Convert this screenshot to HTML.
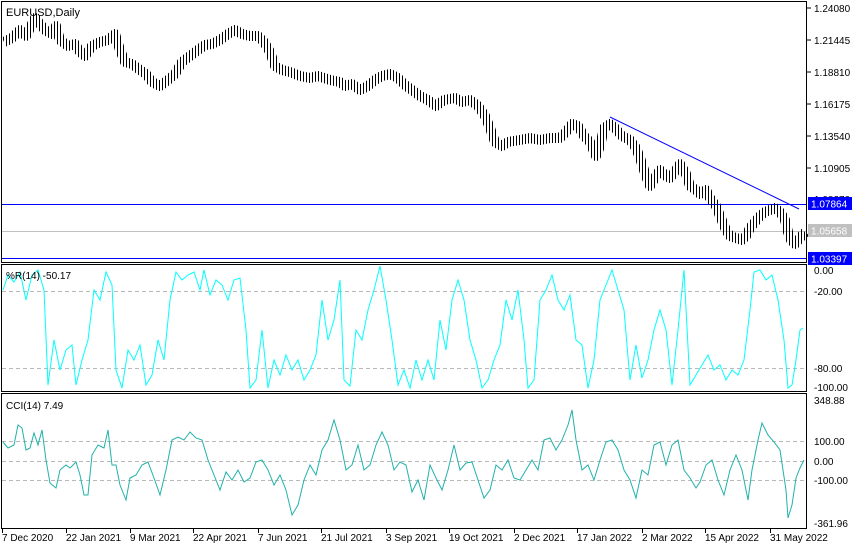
<!DOCTYPE html>
<html><head><meta charset="utf-8"><style>
body{margin:0;background:#fff;width:860px;height:550px;overflow:hidden}
svg{display:block;font-family:"Liberation Sans",sans-serif}
</style></head><body>
<svg width="860" height="550" viewBox="0 0 860 550" xmlns="http://www.w3.org/2000/svg">
<defs>
<pattern id="bars" width="3" height="10" patternUnits="userSpaceOnUse"><rect x="0" y="0" width="1" height="10" fill="#000"/></pattern>
</defs>
<rect width="860" height="550" fill="#fff"/>
<g fill="none" stroke="#000" stroke-width="1">
<rect x="1.5" y="1.5" width="805" height="261"/>
<rect x="1.5" y="264.5" width="805" height="127"/>
<rect x="1.5" y="393.5" width="805" height="135"/>
</g>
<line x1="2" y1="231.5" x2="806" y2="231.5" stroke="#c0c0c0"/>
<line x1="2" y1="204.5" x2="806" y2="204.5" stroke="#0000ff"/>
<line x1="2" y1="258.5" x2="806" y2="258.5" stroke="#0000ff"/>
<line x1="610" y1="117" x2="799" y2="209" stroke="#0000ff"/>
<polyline fill="none" stroke="url(#bars)" stroke-width="10" stroke-linejoin="round" points="4,42 12,38 20,30 26,36 35,18 40,24 45,30 52,34 56,26 60,40 68,46 75,44 80,52 85,56 92,46 100,42 108,40 115,34 120,50 125,62 132,64 140,70 146,74 152,82 160,86 168,80 175,74 182,62 190,56 198,50 205,45 212,44 220,40 228,34 235,30 242,34 250,36 258,36 264,42 270,52 275,66 282,70 290,72 300,76 310,78 318,76 330,80 340,82 345,86 352,84 360,90 368,86 375,80 382,76 390,74 398,78 405,85 412,90 420,96 428,100 436,106 444,100 455,98 462,102 470,100 478,106 485,116 490,128 495,142 502,146 508,142 520,140 530,138 540,140 550,138 560,138 566,132 572,124 578,126 584,136 590,142 596,156 600,146 604,128 610,124 615,128 622,136 630,140 636,148 640,158 646,176 650,186 656,176 660,170 666,176 670,178 676,170 680,164 686,174 690,186 696,190 700,194 706,190 710,198 716,206 720,216 726,230 730,236 736,238 742,240 746,236 750,228 755,222 760,216 765,212 770,210 775,208 780,212 785,220 788,232 791,240 795,244 800,238 805,232"/>
<text x="6" y="16" font-size="11">EURUSD,Daily</text>
<g stroke="#b8b8b8" stroke-dasharray="4,3"><line x1="2" y1="291.5" x2="806" y2="291.5"/><line x1="2" y1="368.5" x2="806" y2="368.5"/></g>
<polyline fill="none" stroke="#00ffff" stroke-width="1" points="3,290 8,275 14,282 20,272 26,300 32,275 38,270 44,290 48,385 54,340 60,370 66,350 72,345 76,385 82,360 88,340 94,290 100,300 106,272 112,285 116,370 122,388 128,350 134,360 140,345 146,385 152,375 158,340 164,360 170,300 176,272 182,280 188,275 194,272 200,290 204,270 210,295 216,280 222,285 228,300 234,280 240,278 246,330 250,388 256,380 262,330 268,388 274,360 280,375 286,355 292,370 298,360 304,380 310,370 316,355 322,300 328,340 334,320 340,280 344,380 350,386 356,330 362,340 368,310 374,290 380,266 386,300 392,340 398,385 404,370 410,388 416,360 422,380 428,360 434,380 440,320 446,350 452,300 458,280 464,300 470,340 476,360 482,388 488,380 494,360 500,345 506,300 512,320 518,290 524,340 528,388 534,380 540,300 546,290 552,275 558,300 564,310 570,295 576,340 582,345 588,388 594,360 600,300 606,285 612,270 618,290 624,310 630,380 636,345 642,378 648,360 654,330 660,310 666,330 672,385 678,330 684,270 690,385 696,375 702,365 708,355 714,370 720,365 726,380 732,370 738,375 744,360 750,310 754,272 760,270 766,280 772,275 778,300 784,340 788,388 792,385 796,360 800,330 803,328"/>
<text x="6" y="279" font-size="10">%R(14) -50.17</text>
<g stroke="#b8b8b8" stroke-dasharray="4,3"><line x1="2" y1="441.5" x2="806" y2="441.5"/><line x1="2" y1="461.5" x2="806" y2="461.5"/><line x1="2" y1="480.5" x2="806" y2="480.5"/></g>
<polyline fill="none" stroke="#20b2aa" stroke-width="1" points="3,442 8,448 14,445 18,425 22,428 26,450 30,448 34,433 38,445 42,430 46,460 50,483 56,488 60,470 66,465 70,468 76,462 80,475 84,495 88,495 92,455 98,445 104,448 108,430 112,465 116,465 120,485 126,500 130,478 136,475 142,465 148,462 154,478 160,495 166,470 172,440 178,437 184,440 190,432 196,438 202,440 208,460 214,475 220,490 226,472 232,480 238,470 244,482 250,478 256,462 262,460 268,470 274,485 280,475 286,490 292,515 298,505 304,480 310,465 316,475 322,450 328,440 334,420 340,440 346,470 352,465 358,445 364,470 370,465 376,445 382,432 388,445 394,470 400,462 406,465 412,492 418,480 424,500 430,465 436,478 442,490 448,470 454,445 460,470 466,463 472,462 478,480 484,498 490,490 496,465 502,470 508,460 514,478 520,480 526,470 532,460 538,470 544,440 550,438 556,450 562,440 568,425 572,410 576,440 582,470 588,465 594,480 600,460 606,442 612,440 618,450 624,470 630,480 636,498 642,470 648,475 654,445 660,442 666,465 672,445 678,440 684,470 690,478 696,488 700,482 706,465 712,460 718,480 724,495 730,470 736,455 742,470 748,500 752,470 758,440 762,423 768,435 774,442 780,450 786,490 788,518 792,505 796,478 800,468 804,460"/>
<text x="6" y="409" font-size="10">CCI(14) 7.49</text>
<g font-size="10" fill="#000">
<text x="814" y="12">1.24080</text>
<text x="814" y="44">1.21445</text>
<text x="814" y="76">1.18810</text>
<text x="814" y="108">1.16175</text>
<text x="814" y="140">1.13540</text>
<text x="814" y="172">1.10905</text>
<text x="814" y="203">1.08270</text>
<text x="814" y="274">0.00</text>
<text x="814" y="295">-20.00</text>
<text x="814" y="372">-80.00</text>
<text x="814" y="391">-100.00</text>
<text x="814" y="404">348.88</text>
<text x="814" y="445">100.00</text>
<text x="814" y="465">0.00</text>
<text x="814" y="484">-100.00</text>
<text x="814" y="527">-361.96</text>
</g>
<g stroke="#000"><line x1="807" y1="8" x2="811" y2="8"/><line x1="807" y1="40" x2="811" y2="40"/><line x1="807" y1="72" x2="811" y2="72"/><line x1="807" y1="104" x2="811" y2="104"/><line x1="807" y1="136" x2="811" y2="136"/><line x1="807" y1="168" x2="811" y2="168"/></g>
<rect x="808" y="197" width="44" height="13" fill="#0000ff"/><text x="811" y="207.5" font-size="10" fill="#fff">1.07864</text>
<rect x="808" y="224" width="44" height="13" fill="#c0c0c0"/><text x="811" y="234.5" font-size="10" fill="#fff">1.05658</text>
<rect x="808" y="252" width="44" height="13" fill="#0000ff"/><text x="811" y="262.5" font-size="10" fill="#fff">1.03397</text>
<g font-size="10" fill="#000">
<text x="2" y="541">7 Dec 2020</text>
<text x="66" y="541">22 Jan 2021</text>
<text x="130" y="541">9 Mar 2021</text>
<text x="193" y="541">22 Apr 2021</text>
<text x="258" y="541">7 Jun 2021</text>
<text x="321" y="541">21 Jul 2021</text>
<text x="386" y="541">3 Sep 2021</text>
<text x="449" y="541">19 Oct 2021</text>
<text x="514" y="541">2 Dec 2021</text>
<text x="577" y="541">17 Jan 2022</text>
<text x="642" y="541">2 Mar 2022</text>
<text x="705" y="541">15 Apr 2022</text>
<text x="770" y="541">31 May 2022</text>
</g>
<g stroke="#000"><line x1="2.5" y1="529" x2="2.5" y2="533"/><line x1="66.5" y1="529" x2="66.5" y2="533"/><line x1="130.5" y1="529" x2="130.5" y2="533"/><line x1="193.5" y1="529" x2="193.5" y2="533"/><line x1="258.5" y1="529" x2="258.5" y2="533"/><line x1="321.5" y1="529" x2="321.5" y2="533"/><line x1="386.5" y1="529" x2="386.5" y2="533"/><line x1="449.5" y1="529" x2="449.5" y2="533"/><line x1="514.5" y1="529" x2="514.5" y2="533"/><line x1="577.5" y1="529" x2="577.5" y2="533"/><line x1="642.5" y1="529" x2="642.5" y2="533"/><line x1="705.5" y1="529" x2="705.5" y2="533"/><line x1="770.5" y1="529" x2="770.5" y2="533"/></g>
</svg>
</body></html>
